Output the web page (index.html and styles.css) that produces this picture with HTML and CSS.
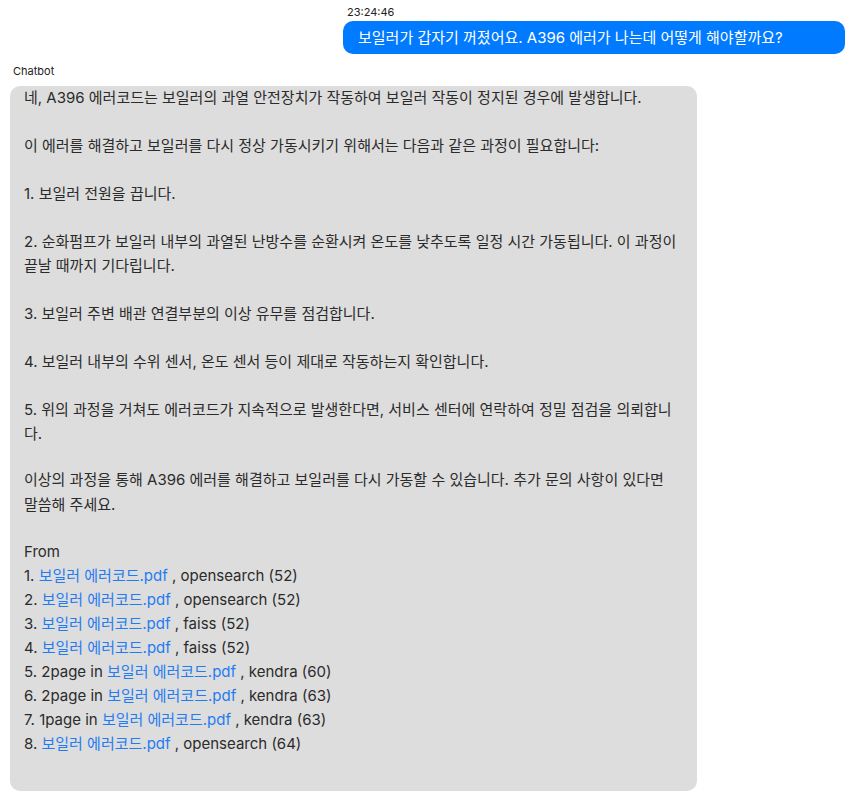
FILE: index.html
```html
<!DOCTYPE html>
<html lang="ko">
<head>
  <meta charset="UTF-8" />
  <title>Chatbot</title>
  <link rel="stylesheet" href="styles.css">
</head>
<body>
  <div class="chat">
    <div class="msg-right">
      <div class="time">23:24:46</div>
      <div class="bubble-user">보일러가 갑자기 꺼졌어요. A396 에러가 나는데 어떻게 해야할까요?</div>
    </div>

    <div class="msg-left">
      <div class="sender">Chatbot</div>
      <div class="bubble-bot">
        <p>네, A396 에러코드는 보일러의 과열 안전장치가 작동하여 보일러 작동이 정지된 경우에 발생합니다.</p>
        <p>이 에러를 해결하고 보일러를 다시 정상 가동시키기 위해서는 다음과 같은 과정이 필요합니다:</p>
        <p>1. 보일러 전원을 끕니다.</p>
        <p>2. 순화펌프가 보일러 내부의 과열된 난방수를 순환시켜 온도를 낮추도록 일정 시간 가동됩니다. 이 과정이<br>끝날 때까지 기다립니다.</p>
        <p>3. 보일러 주변 배관 연결부분의 이상 유무를 점검합니다.</p>
        <p>4. 보일러 내부의 수위 센서, 온도 센서 등이 제대로 작동하는지 확인합니다.</p>
        <p class="step-last">5. 위의 과정을 거쳐도 에러코드가 지속적으로 발생한다면, 서비스 센터에 연락하여 정밀 점검을 의뢰합니<br>다.</p>
        <p class="closing">이상의 과정을 통해 A396 에러를 해결하고 보일러를 다시 가동할 수 있습니다. 추가 문의 사항이 있다면<br>말씀해 주세요.</p>
        <ul class="sources">
          <li>From</li>
          <li>1. <a href="#">보일러 에러코드.pdf</a> , opensearch (52)</li>
          <li>2. <a href="#">보일러 에러코드.pdf</a> , opensearch (52)</li>
          <li>3. <a href="#">보일러 에러코드.pdf</a> , faiss (52)</li>
          <li>4. <a href="#">보일러 에러코드.pdf</a> , faiss (52)</li>
          <li>5. 2page in <a href="#">보일러 에러코드.pdf</a> , kendra (60)</li>
          <li>6. 2page in <a href="#">보일러 에러코드.pdf</a> , kendra (63)</li>
          <li>7. 1page in <a href="#">보일러 에러코드.pdf</a> , kendra (63)</li>
          <li>8. <a href="#">보일러 에러코드.pdf</a> , opensearch (64)</li>
        </ul>
      </div>
    </div>
  </div>
</body>
</html>
```

FILE: styles.css
```css
body {
  margin: 0;
  background: #ffffff;
  font-family: Inter, "Noto Sans CJK KR", sans-serif;
  color: #2b2b2b;
}
.chat {
  padding: 5px 11px 0 10px;
}
.msg-right {
  display: flex;
  flex-direction: column;
  align-items: flex-end;
}
.time {
  align-self: flex-start;
  margin-left: 337px;
  font-size: 11px;
  line-height: 14px;
  color: #222;
}
.bubble-user {
  width: 502px;
  box-sizing: border-box;
  background: #007aff;
  color: #fff;
  font-size: 15px;
  line-height: 33px;
  padding: 0 15px;
  border-radius: 10px;
  margin-top: 2px;
}
.msg-left {
  margin-top: 10px;
}
.sender {
  font-size: 11px;
  line-height: 14px;
  margin-left: 3px;
  color: #222;
}
.bubble-bot {
  width: 687px;
  box-sizing: border-box;
  background: #dddddd;
  border-radius: 10px;
  margin-top: 8px;
  padding: 0 14px 35px;
  font-size: 15px;
  line-height: 24px;
}
.bubble-bot p {
  margin: 0 0 24px;
}
.bubble-bot p.step-last {
  margin-bottom: 21px;
}
.bubble-bot p.closing {
  line-height: 25px;
  margin-bottom: 23px;
}
.sources {
  list-style: none;
  margin: 0;
  padding: 0;
}
.sources a {
  color: #1f7cf2;
  text-decoration: none;
}
```
